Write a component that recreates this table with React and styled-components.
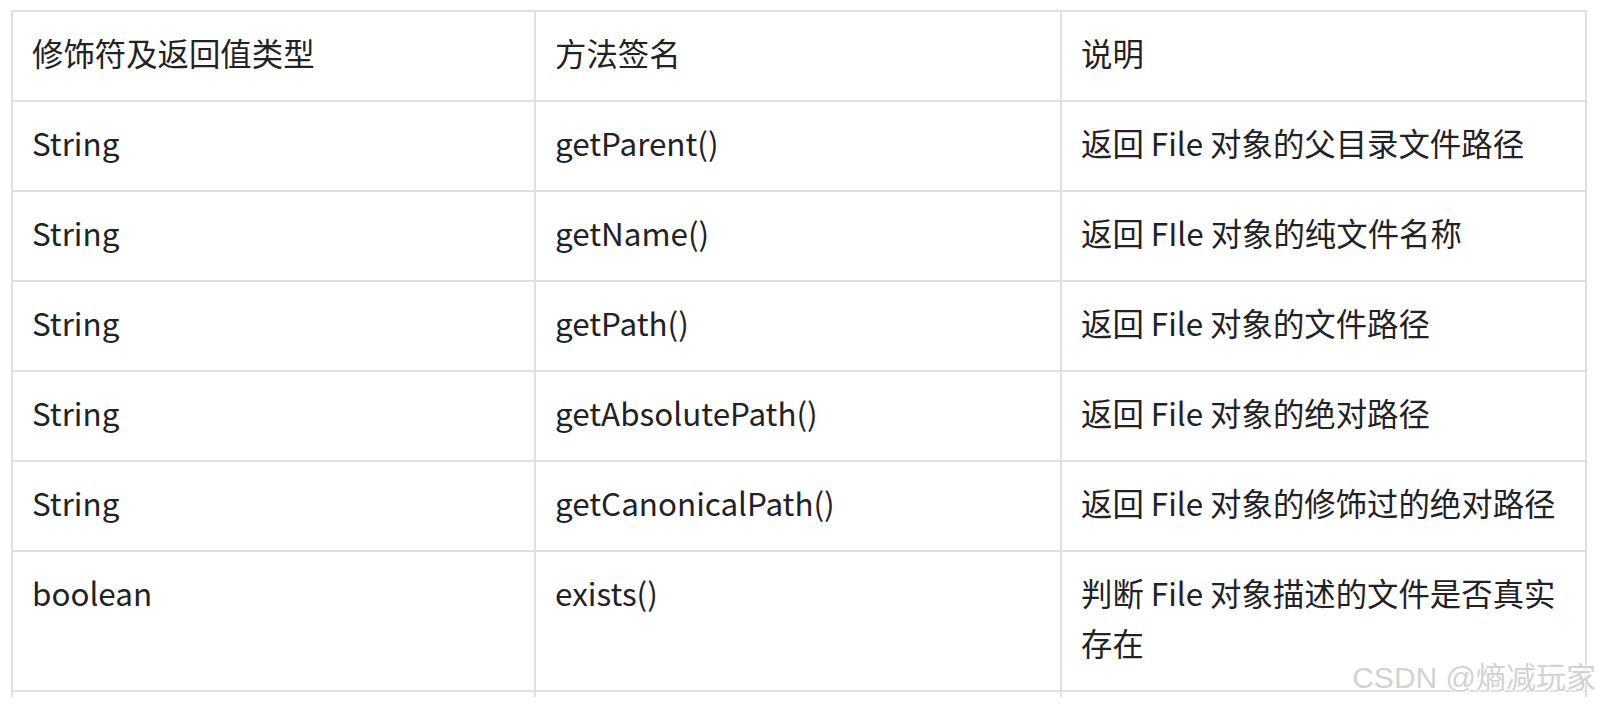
import React from 'react';
import styled, { createGlobalStyle } from 'styled-components';

const GlobalStyle = createGlobalStyle`
  html, body {
    margin: 0;
    padding: 0;
    background: #ffffff;
  }
`;

const Page = styled.div`
  position: relative;
  width: 1602px;
  height: 712px;
  padding: 10px 0 0 11px;
  box-sizing: border-box;
  overflow: hidden;
`;

const Clip = styled.div`
  width: 1576px;
  height: 687px;
  overflow: hidden;
`;

const Grid = styled.div`
  display: grid;
  grid-template-columns: 523px 526px 525px;
  width: 1576px;
  box-sizing: border-box;
  border-top: 2px solid #dfdfe4;
  border-left: 2px solid #dfdfe4;
  font-family: "Noto Sans CJK SC", "Noto Sans", sans-serif;
  font-size: 31.4px;
  line-height: 50px;
  color: #222226;
`;

const Cell = styled.div`
  box-sizing: border-box;
  min-height: ${(p) => (p.$empty ? '40px' : '90px')};
  padding: 16px 10px 22px 19px;
  border-right: 2px solid #dfdfe4;
  border-bottom: 2px solid #dfdfe4;
  font-weight: 400;
  word-break: break-all;
`;

const Watermark = styled.div`
  position: absolute;
  right: 6px;
  top: 663px;
  font-family: "Liberation Sans", "Noto Sans CJK SC", sans-serif;
  font-size: 30px;
  line-height: 30px;
  color: #d2d2d2;
  text-shadow: 0 0 1px #ffffff, 1px 1px 0 #ffffff, -1px -1px 0 #ffffff;
  white-space: nowrap;
`;

const header = ['修饰符及返回值类型', '方法签名', '说明'];

const rows = [
  ['String', 'getParent()', '返回 File 对象的父目录文件路径'],
  ['String', 'getName()', '返回 FIle 对象的纯文件名称'],
  ['String', 'getPath()', '返回 File 对象的文件路径'],
  ['String', 'getAbsolutePath()', '返回 File 对象的绝对路径'],
  ['String', 'getCanonicalPath()', '返回 File 对象的修饰过的绝对路径'],
  ['boolean', 'exists()', '判断 File 对象描述的文件是否真实存在'],
];

const App = () => {
  return (
    <Page>
      <GlobalStyle />
      <Clip>
        <Grid>
          {header.map((h) => (
            <Cell key={h}>{h}</Cell>
          ))}
          {rows.map((r, i) =>
            r.map((c, j) => <Cell key={`${i}-${j}`}>{c}</Cell>)
          )}
          <Cell $empty />
          <Cell $empty />
          <Cell $empty />
        </Grid>
      </Clip>
      <Watermark>CSDN @熵减玩家</Watermark>
    </Page>
  );
};

export default App;
